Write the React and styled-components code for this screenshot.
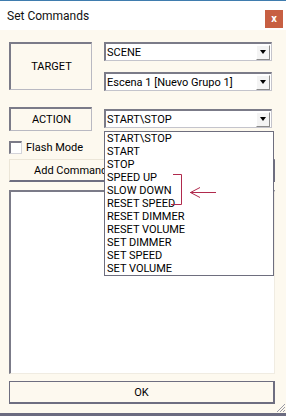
import React from "react";
import styled, { createGlobalStyle } from "styled-components";

const actions = [
  "START\\STOP",
  "START",
  "STOP",
  "SPEED UP",
  "SLOW DOWN",
  "RESET SPEED",
  "RESET DIMMER",
  "RESET VOLUME",
  "SET DIMMER",
  "SET SPEED",
  "SET VOLUME",
];

const Global = createGlobalStyle`
  html, body {
    margin: 0;
    padding: 0;
    background: #fdf9ef;
  }
  body {
    font-family: Roboto, "Liberation Sans", sans-serif;
    font-size: 11px;
    color: #000;
  }
`;

const Window = styled.div`
  width: 286px;
  height: 416px;
  box-sizing: border-box;
  display: flex;
  flex-direction: column;
  background: #fdf9ef;
  border-top: 1px solid #3f7cae;
  border-bottom: 3px solid #6b6b80;
  position: relative;
  overflow: hidden;
`;

const TitleBar = styled.div`
  height: 29px;
  flex: none;
  background: #fff;
  display: flex;
  align-items: center;
  justify-content: space-between;
  padding: 0 3px 0 7px;
  font-size: 12px;
  color: #111;
`;

const CloseButton = styled.div`
  width: 18px;
  height: 18px;
  margin-top: 6px;
  background: #c75f42;
  color: #fff;
  font-size: 11px;
  font-weight: bold;
  display: flex;
  align-items: center;
  justify-content: center;
  line-height: 1;
`;

const Body = styled.div`
  flex: 1;
  display: flex;
  flex-direction: column;
  padding: 12px 11px 0 9px;
`;

const Section = styled.div`
  display: flex;
  align-items: flex-start;
  gap: 12px;
  margin-top: ${(p) => p.top || 0}px;
`;

const LabelBox = styled.div`
  width: 83px;
  height: ${(p) => p.h}px;
  flex: none;
  box-sizing: border-box;
  display: flex;
  align-items: center;
  justify-content: center;
  border-top: 2px solid #7b7b88;
  border-left: 2px solid #7b7b88;
  border-right: 1px solid #b9b9c2;
  border-bottom: 1px solid #b9b9c2;
  padding-left: 1px;
`;

const ComboStack = styled.div`
  display: flex;
  flex-direction: column;
  gap: 11px;
`;

const ComboWrap = styled.div`
  position: relative;
  margin-top: ${(p) => p.top || 0}px;
`;

const Combo = styled.div`
  width: 168px;
  height: 19px;
  box-sizing: border-box;
  background: #fff;
  border-top: 2px solid #7b7b88;
  border-left: 2px solid #7b7b88;
  border-right: 1px solid #c4c4cc;
  border-bottom: 1px solid #c4c4cc;
  display: flex;
  align-items: center;
  justify-content: space-between;
  padding-left: 1px;
  white-space: nowrap;
`;

const DropButton = styled.div`
  width: 14px;
  height: 15px;
  margin-right: 1px;
  background: #f4f4f4;
  border-top: 1px solid #fff;
  border-left: 1px solid #fff;
  border-right: 1px solid #8a8a8a;
  border-bottom: 1px solid #8a8a8a;
  box-sizing: border-box;
  display: flex;
  align-items: center;
  justify-content: center;
  &::after {
    content: "";
    border-left: 3.5px solid transparent;
    border-right: 3.5px solid transparent;
    border-top: 4px solid #000;
  }
`;

const DropList = styled.ul`
  position: absolute;
  top: 22px;
  left: 0;
  width: 170px;
  margin: 0;
  padding: 0;
  list-style: none;
  box-sizing: border-box;
  background: #fff;
  border: 1px solid #6e6e7e;
  z-index: 2;
`;

const DropItem = styled.li`
  height: 13px;
  line-height: 13px;
  padding-left: 2px;
  white-space: nowrap;
`;

const CheckRow = styled.label`
  display: flex;
  align-items: center;
  gap: 4px;
  margin-top: 10px;
  height: 13px;
`;

const CheckBox = styled.span`
  width: 13px;
  height: 13px;
  box-sizing: border-box;
  background: #fff;
  border-top: 2px solid #7b7b88;
  border-left: 2px solid #7b7b88;
  border-right: 1px solid #d4d4da;
  border-bottom: 1px solid #d4d4da;
`;

const FlatButton = styled.div`
  height: ${(p) => p.h}px;
  margin-top: ${(p) => p.top}px;
  box-sizing: border-box;
  display: flex;
  align-items: center;
  justify-content: ${(p) => (p.center ? "center" : "flex-start")};
  padding-left: ${(p) => (p.center ? 0 : 24)}px;
  border-top: 1px solid ${(p) => (p.strong ? "#6e6e80" : "#ece6d8")};
  border-left: 1px solid ${(p) => (p.strong ? "#6e6e80" : "#ece6d8")};
  border-right: 2px solid #6e6e80;
  border-bottom: 2px solid #6e6e80;
  background: #fdf9ef;
  white-space: nowrap;
  overflow: hidden;
`;

const ListBox = styled.div`
  height: 184px;
  margin-top: 8px;
  box-sizing: border-box;
  background: #fff;
  border-top: 2px solid #7b7b88;
  border-left: 2px solid #7b7b88;
  border-right: 1px solid #f0ece2;
  border-bottom: 1px solid #f0ece2;
`;

const Annotation = styled.svg`
  position: absolute;
  left: 168px;
  top: 168px;
  z-index: 3;
`;

const Grip = styled.svg`
  position: absolute;
  right: 0;
  bottom: 0;
`;

export default function App() {
  return (
    <>
      <Global />
      <Window>
        <TitleBar>
          <span>Set Commands</span>
          <CloseButton>x</CloseButton>
        </TitleBar>
        <Body>
          <Section>
            <LabelBox h={48}>TARGET</LabelBox>
            <ComboStack>
              <Combo>
                <span>SCENE</span>
                <DropButton />
              </Combo>
              <Combo>
                <span>Escena 1 [Nuevo Grupo 1]</span>
                <DropButton />
              </Combo>
            </ComboStack>
          </Section>
          <Section top={16}>
            <LabelBox h={24}>ACTION</LabelBox>
            <ComboWrap top={2}>
              <Combo>
                <span>START\STOP</span>
                <DropButton />
              </Combo>
              <DropList>
                {actions.map((a) => (
                  <DropItem key={a}>{a}</DropItem>
                ))}
              </DropList>
            </ComboWrap>
          </Section>
          <CheckRow>
            <CheckBox />
            <span>Flash Mode</span>
          </CheckRow>
          <FlatButton h={23} top={5}>
            Add Command
          </FlatButton>
          <ListBox />
          <FlatButton h={23} top={7} center strong>
            OK
          </FlatButton>
        </Body>
        <Annotation width="52" height="42" viewBox="0 0 52 42">
          <g stroke="#b02a4d" strokeWidth="1" fill="none">
            <path d="M5 5.5 H13.5 V35.5 H3" />
            <path d="M22 23.5 H48" />
            <path d="M32 18.5 L22.5 23.5 L32 28.5" />
          </g>
        </Annotation>
        <Grip width="12" height="12" viewBox="0 0 12 12">
          <g stroke="#9a9aa6" strokeWidth="1">
            <path d="M11 3 L3 11" />
            <path d="M11 6 L6 11" />
            <path d="M11 9 L9 11" />
          </g>
        </Grip>
      </Window>
    </>
  );
}
